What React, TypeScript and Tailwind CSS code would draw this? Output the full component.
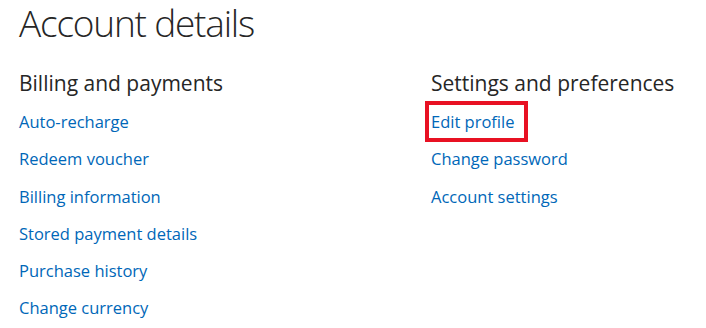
export default function App() {
  const left = [
    "Auto-recharge",
    "Redeem voucher",
    "Billing information",
    "Stored payment details",
    "Purchase history",
    "Change currency",
  ];
  const right = ["Edit profile", "Change password", "Account settings"];
  return (
    <div
      className="w-[706px] h-[328px] overflow-hidden bg-white pl-[19px] pt-[3px] text-[#262626]"
      style={{ fontFamily: '"Open Sans", "Noto Sans", sans-serif' }}
    >
      <h1 className="text-[37px] font-light leading-[40px] tracking-[-1.2px]">
        Account details
      </h1>
      <div className="flex mt-[26px]">
        <div className="w-[412px]">
          <h2 className="text-[21px] leading-[28px]">Billing and payments</h2>
          <ul className="mt-[6px]">
            {left.map((t) => (
              <li key={t} className="h-[37.3px] text-[16.5px] leading-[37px] text-[#0067b8]">
                {t}
              </li>
            ))}
          </ul>
        </div>
        <div>
          <h2 className="text-[21px] leading-[28px]">Settings and preferences</h2>
          <ul className="mt-[6px]">
            {right.map((t, i) => (
              <li key={t} className="h-[37.3px] text-[16.5px] leading-[37px] text-[#0067b8]">
                {i === 0 ? (
                  <span className="relative">
                    {t}
                    <span className="absolute -left-[6px] -right-[13px] -top-[9px] -bottom-[9px] border-[4px] border-[#e81123]" />
                  </span>
                ) : (
                  t
                )}
              </li>
            ))}
          </ul>
        </div>
      </div>
    </div>
  );
}
